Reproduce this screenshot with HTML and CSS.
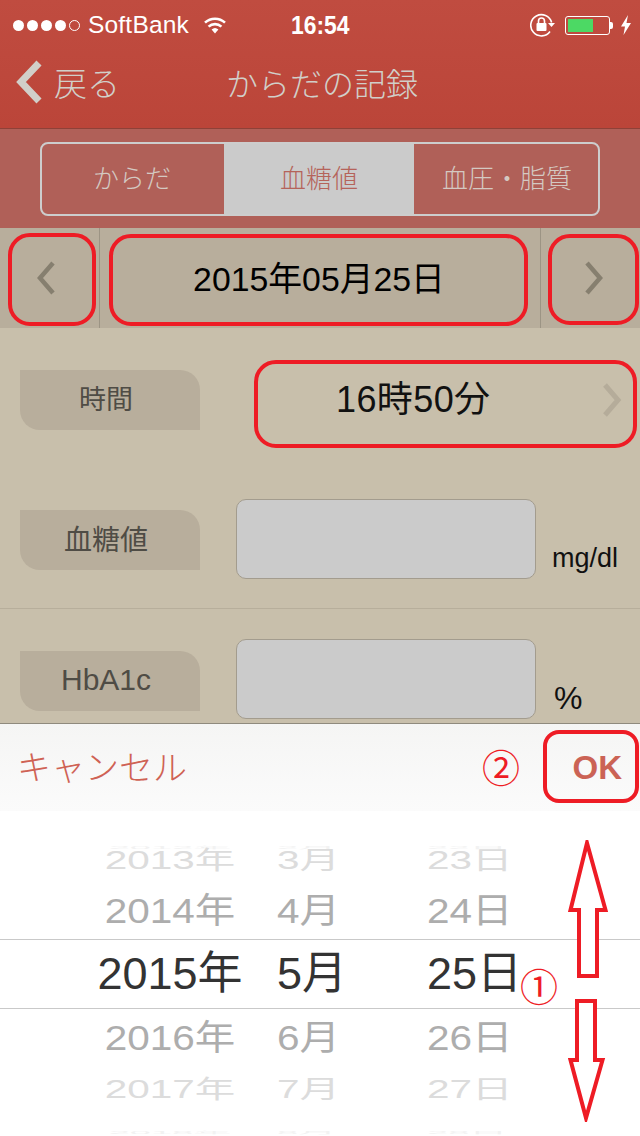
FILE: index.html
```html
<!DOCTYPE html>
<html lang="ja">
<head>
<meta charset="utf-8">
<title>からだの記録</title>
<link rel="stylesheet" href="styles.css">
</head>
<body>
<div class="page">
  <header class="header">
    <div class="status">
      <div class="dots"><i></i><i></i><i></i><i></i><i class="off"></i></div>
      <span class="carrier">SoftBank</span>
      <svg class="wifi" viewBox="0 0 24 18" width="24" height="18"><path d="M12 17.5 8.6 13.6a5 5 0 0 1 6.8 0Z" fill="#fff"/><path d="M5.6 10.6a9.4 9.4 0 0 1 12.8 0M2 6.6a14.8 14.8 0 0 1 20 0" fill="none" stroke="#fff" stroke-width="2.6"/></svg>
      <span class="clock">16:54</span>
      <svg class="lock" viewBox="0 0 26 24" width="26" height="24"><path d="M20 18.5A10.6 10.6 0 1 1 21.6 9.5" fill="none" stroke="#fff" stroke-width="1.6"/><path d="M18 10h7l-3.500 4Z" fill="#fff"/><rect x="6.500" y="10" width="10" height="8" rx="1" fill="#fff"/><path d="M8.500 10V8a3 3 0 0 1 6 0v2" fill="none" stroke="#fff" stroke-width="1.600"/></svg>
      <div class="battery"><div class="battery-fill"></div></div>
      <div class="battery-tip"></div>
      <svg class="bolt" viewBox="0 0 12 20" width="12" height="20"><path d="M8 0 1 11.500h4L3.500 20 11 8H6.500Z" fill="#fff"/></svg>
    </div>
    <nav class="nav">
      <svg class="back" viewBox="0 0 28 44" width="28" height="44"><path d="M24 3 6 22l18 19" fill="none" stroke="#d1cfc9" stroke-width="7"/></svg>
      <span class="back-label">戻る</span>
      <span class="title">からだの記録</span>
    </nav>
  </header>

  <section class="tabs">
    <div class="segment">
      <div class="tab">からだ</div>
      <div class="tab active">血糖値</div>
      <div class="tab">血圧・脂質</div>
    </div>
  </section>

  <section class="date-row">
    <div class="date-btn date-prev"><svg viewBox="0 0 22 36" width="22" height="36"><path d="M18 3 5 18l13 15" fill="none" stroke="#867f6f" stroke-width="4.500"/></svg></div>
    <div class="date-value">2015年05月25日</div>
    <div class="date-btn date-next"><svg viewBox="0 0 22 36" width="22" height="36"><path d="m4 3 13 15L4 33" fill="none" stroke="#867f6f" stroke-width="4.500"/></svg></div>
  </section>

  <section class="form">
    <div class="row row-time">
      <div class="label">時間</div>
      <div class="time-value">
        <span class="time-text">16時50分</span>
        <svg viewBox="0 0 22 36" width="22" height="36"><path d="m4 3 13 15L4 33" fill="none" stroke="#b5ac9a" stroke-width="5"/></svg>
      </div>
    </div>
    <div class="row row-line">
      <div class="label">血糖値</div>
      <div class="input"></div>
      <div class="unit">mg/dl</div>
    </div>
    <div class="row row-last">
      <div class="label">HbA1c</div>
      <div class="input"></div>
      <div class="unit unit-large">%</div>
    </div>
  </section>

  <section class="toolbar">
    <span class="cancel">キャンセル</span>
    <span class="ok">OK</span>
  </section>

  <section class="picker">
    <div class="p-row r-cut"><span class="y">2012年</span><span class="m">2月</span><span class="d">22日</span></div>
    <div class="p-row r-far"><span class="y">2013年</span><span class="m">3月</span><span class="d">23日</span></div>
    <div class="p-row r-near"><span class="y">2014年</span><span class="m">4月</span><span class="d">24日</span></div>
    <div class="p-row r-sel"><span class="y">2015年</span><span class="m">5月</span><span class="d">25日</span></div>
    <div class="p-row r-near r-low"><span class="y">2016年</span><span class="m">6月</span><span class="d">26日</span></div>
    <div class="p-row r-far"><span class="y">2017年</span><span class="m">7月</span><span class="d">27日</span></div>
    <div class="p-row r-cut"><span class="y">2018年</span><span class="m">8月</span><span class="d">28日</span></div>
  </section>

  <div class="mark mark-prev"></div>
  <div class="mark mark-date"></div>
  <div class="mark mark-next"></div>
  <div class="mark mark-time"></div>
  <div class="mark mark-ok"></div>
  <span class="num num-1">①</span>
  <span class="num num-2">②</span>
  <svg class="arrow arrow-up" viewBox="0 0 40 140" width="40" height="140"><path d="M19 3 2.500 70H11v66h18V70h8.500Z" fill="#fff" stroke="#ee1c25" stroke-width="4"/></svg>
  <svg class="arrow arrow-down" viewBox="0 0 40 124" width="40" height="124"><path d="M9 3v59H2.500L18 120 34.500 62H27V3Z" fill="#fff" stroke="#ee1c25" stroke-width="4"/></svg>
</div>
</body>
</html>
```
FILE: styles.css
```css
* { box-sizing: border-box; }
html, body { margin: 0; padding: 0; }
body { width: 640px; height: 1136px; overflow: hidden; background: #fff; }
.page {
  position: relative;
  width: 640px;
  height: 1136px;
  overflow: hidden;
  font-family: "Liberation Sans", "Noto Sans CJK JP", sans-serif;
}

/* header */
.header {
  height: 129px;
  background: linear-gradient(#c04c40, #bb4539);
  border-bottom: 1px solid #8e4138;
}
.status { height: 40px; display: flex; align-items: center; color: #fff; padding-top: 10px; }
.dots { display: flex; gap: 3px; margin-left: 13px; width: 75px; }
.dots i { width: 11px; height: 11px; border-radius: 50%; background: #fff; display: block; }
.dots i.off { background: none; border: 1px solid #fff; }
.carrier { font-size: 24.500px; width: 115px; letter-spacing: .2px; }
.wifi { margin-right: 64px; }
.clock { font-size: 26px; font-weight: 700; width: 239px; transform: scaleX(.88); transform-origin: left; }
.lock { margin-right: 9px; }
.battery { width: 45px; height: 19px; border: 1px solid #fff; border-radius: 3px; padding: 2px; }
.battery-fill { width: 25px; height: 100%; background: #4cd964; }
.battery-tip { width: 3px; height: 7px; background: #fff; margin-right: 7px; border-radius: 0 2px 2px 0; }
.nav { height: 88px; display: flex; align-items: center; padding-left: 15px; color: #d1cfc9; padding-bottom: 4px; }
.back { margin-right: 11px; }
.back-label { font-size: 33px; width: 172px; font-family: "Noto Sans CJK JP", sans-serif; font-weight: 300; }
.title { font-size: 32px; font-family: "Noto Sans CJK JP", sans-serif; font-weight: 300; }

/* segmented control */
.tabs { height: 99px; background: #b06058; padding: 13px 40px 0; }
.segment {
  display: grid;
  grid-template-columns: 182px 190px 1fr;
  height: 74px;
  border: 2px solid #cdcdcd;
  border-radius: 8px;
  overflow: hidden;
}
.tab {
  display: flex;
  align-items: center;
  justify-content: center;
  font-family: "Noto Sans CJK JP", sans-serif;
  font-weight: 300;
  font-size: 26px;
  color: #d4c9c2;
  padding-bottom: 5px;
}
.tab:first-child { padding-right: 2px; }
.tab:last-child { padding-left: 2px; }
.tab.active { background: #cbcbcb; color: #b5635a; }

/* date row */
.date-row { height: 100px; display: grid; grid-template-columns: 100px 1fr 100px; background: #b8ae9c; }
.date-btn { display: flex; align-items: center; justify-content: center; }
.date-prev { border-right: 1px solid #9c9484; padding-right: 8px; }
.date-next { border-left: 1px solid #9c9484; padding-left: 6px; }
.date-value { display: flex; align-items: center; justify-content: center; font-size: 33.800px; color: #000; padding: 0 2px 3px 0; }

/* form */
.form { height: 395px; background: #c8bfab; overflow: hidden; }
.row { height: 140px; display: flex; align-items: flex-start; padding: 31px 0 0 20px; }
.row-line { height: 141px; border-bottom: 1px solid #b7ae9b; }
.row-last { padding-top: 30px; }
.label {
  width: 180px;
  height: 60px;
  margin-top: 11px;
  background: #b8ae9c;
  border-radius: 0 20px 0 20px;
  display: flex;
  align-items: center;
  justify-content: center;
  font-size: 28px;
  color: #4f4c45;
  padding: 0 8px 5px 0;
}
.row-time .label { font-size: 27px; }
.row-last .label { margin-top: 12px; font-size: 30px; padding-bottom: 2px; }
.input { width: 300px; height: 80px; margin-left: 36px; background: #cbcbcb; border: 1px solid #a39c8e; border-radius: 10px; }
.unit { margin: 44px 0 0 16px; font-size: 27px; color: #111; }
.unit-large { margin: 41px 0 0 18px; font-size: 32px; }
.time-value { display: flex; align-items: center; width: 404px; height: 60px; margin: 11px 0 0 36px; color: #111; }
.time-text { font-size: 36px; margin-left: 100px; width: 265px; letter-spacing: .4px; padding-bottom: 9px; }

/* toolbar */
.toolbar {
  height: 88px;
  display: flex;
  align-items: center;
  justify-content: space-between;
  padding: 0 18px 0 17px;
  background: linear-gradient(#f5f5f4, #fbfbfb);
  border-top: 1px solid #8f8a7d;
}
.cancel { font-size: 34px; color: #cf6254; font-family: "Noto Sans CJK JP", sans-serif; font-weight: 300; padding-bottom: 4px; }
.ok { font-size: 33px; font-weight: 700; color: #cb6355; }

/* picker */
.picker { height: 325px; padding-top: 15px; background: #fff; }
.p-row {
  display: grid;
  grid-template-columns: 180px 167px 1fr;
  padding-left: 80px;
  align-items: center;
  font-size: 40.500px;
  line-height: 44px;
  color: #adadad;
}
.y { text-align: center; }
.m { margin-left: 17px; }
.p-row span { display: block; white-space: nowrap; }
.r-cut { height: 12px; font-size: 38px; color: #f2f2f2; }
.r-cut span { transform: scaleY(.1); }
.r-far { height: 44px; color: #dcdcdc; }
.r-far span { transform: scaleY(.62); }
.r-near { height: 57px; }
.r-near span { transform: scaleY(.87); }
.r-low { height: 58px; }
.r-sel { height: 70px; font-size: 45px; color: #333; border-top: 1px solid #c9c9c9; border-bottom: 1px solid #c9c9c9; }

/* annotations laid over the screen */
.mark { position: absolute; border: 4px solid #ee1c25; border-radius: 22px; }
.mark-prev { left: 8px; top: 233px; width: 88px; height: 93px; }
.mark-date { left: 109px; top: 234px; width: 419px; height: 92px; }
.mark-next { left: 548px; top: 234px; width: 91px; height: 91px; }
.mark-time { left: 254px; top: 360px; width: 383px; height: 88px; }
.mark-ok { left: 543px; top: 730px; width: 96px; height: 73px; border-radius: 16px; }
.num { position: absolute; color: #ee1c25; font-size: 38px; line-height: 38px; font-family: "Noto Sans CJK JP", sans-serif; font-weight: 400; }
.num-1 { left: 520px; top: 966px; }
.num-2 { left: 482px; top: 747px; }
.arrow { position: absolute; }
.arrow-up { left: 568px; top: 840px; }
.arrow-down { left: 568px; top: 998px; }
```
